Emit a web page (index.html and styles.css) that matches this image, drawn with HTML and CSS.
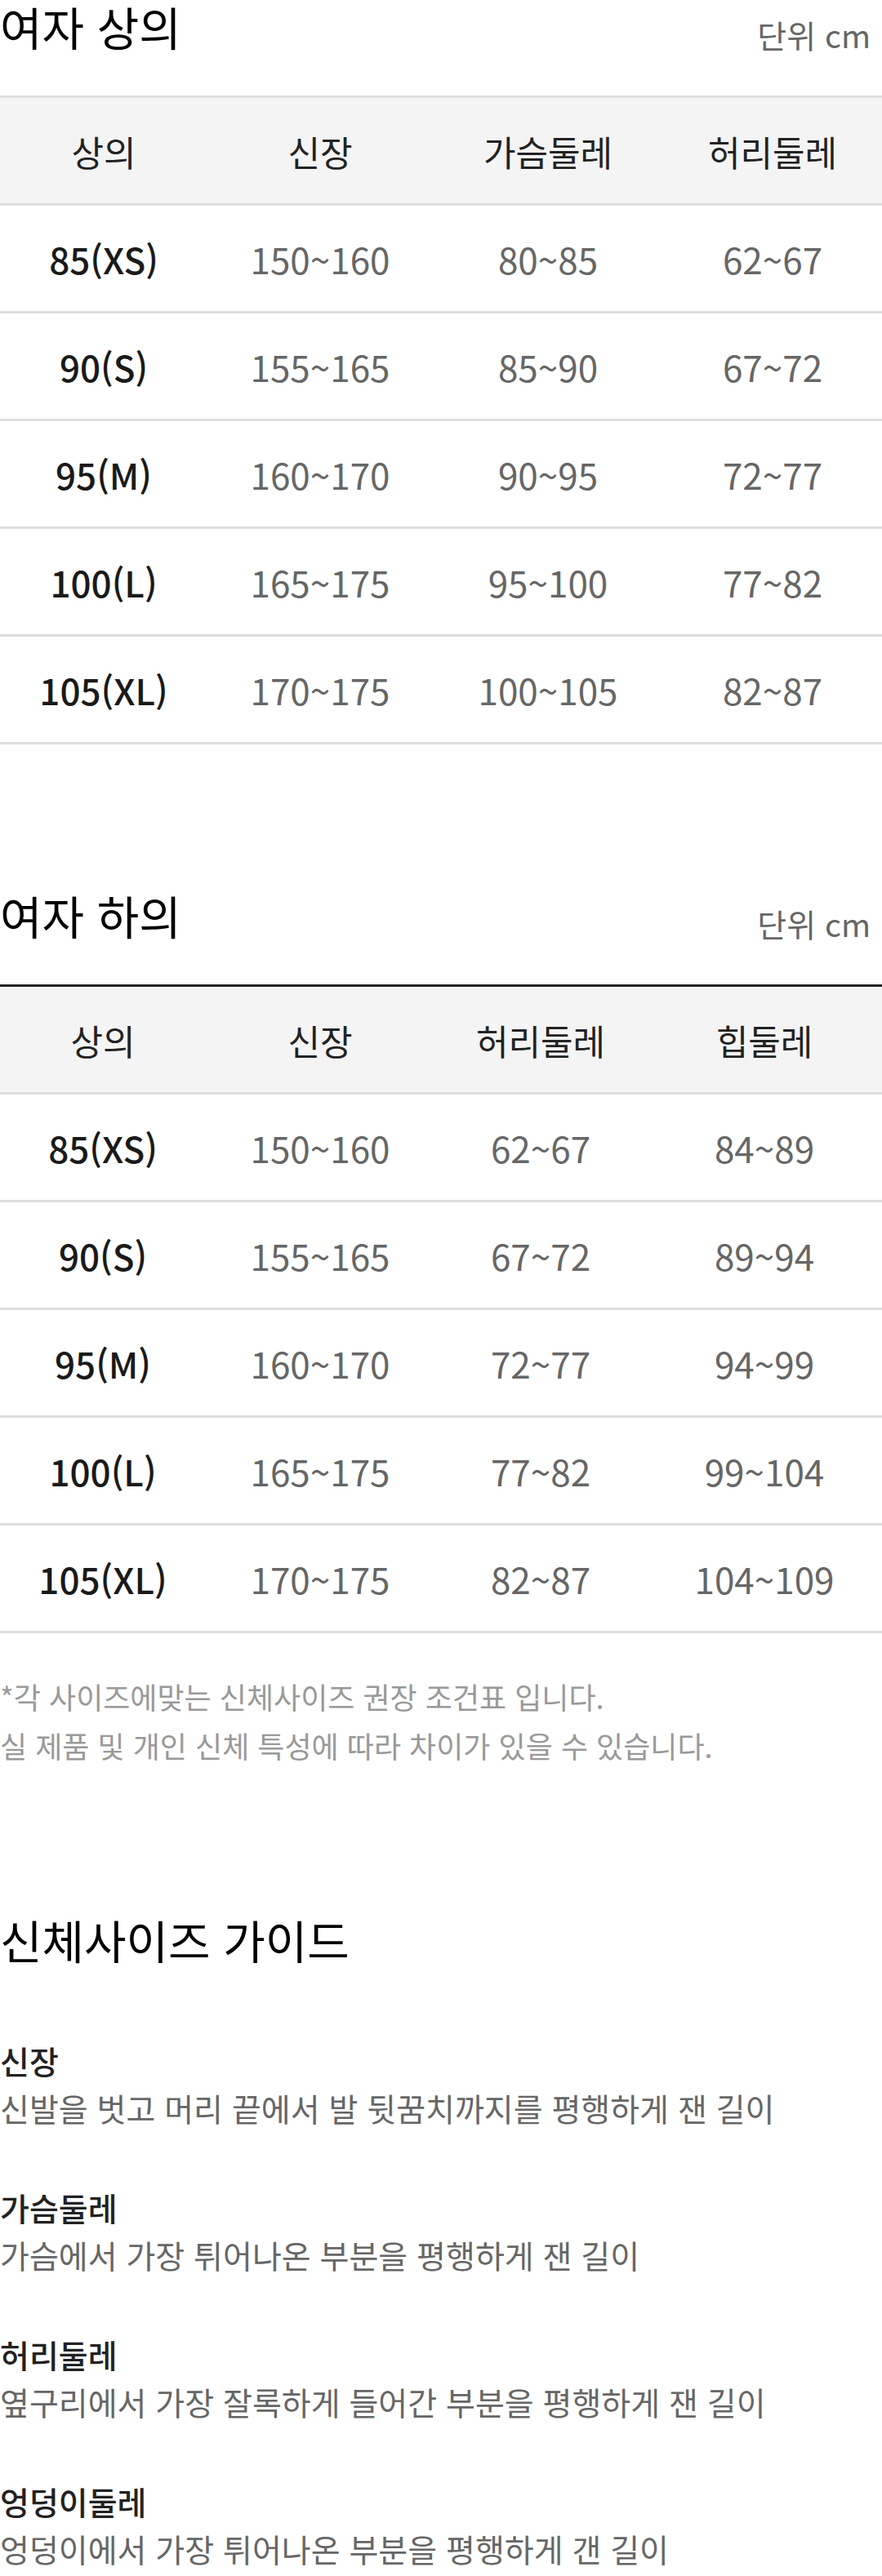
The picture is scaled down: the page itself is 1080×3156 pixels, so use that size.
FILE: index.html
```html
<!DOCTYPE html>
<html lang="ko">
<head>
<meta charset="utf-8">
<title>사이즈 가이드</title>
<link rel="stylesheet" href="styles.css">
</head>
<body>
<main class="page">
  <section class="size-sec">
    <div class="sec-head">
      <h2 class="sec-title">여자 상의</h2>
      <span class="unit">단위 cm</span>
    </div>
    <table class="size-table light-top">
      <colgroup>
        <col class="t1-c1"><col class="t1-c2"><col class="t1-c3"><col class="t1-c4">
      </colgroup>
      <thead>
        <tr><th>상의</th><th>신장</th><th>가슴둘레</th><th>허리둘레</th></tr>
      </thead>
      <tbody>
        <tr><td class="sz">85(XS)</td><td>150~160</td><td>80~85</td><td>62~67</td></tr>
        <tr><td class="sz">90(S)</td><td>155~165</td><td>85~90</td><td>67~72</td></tr>
        <tr><td class="sz">95(M)</td><td>160~170</td><td>90~95</td><td>72~77</td></tr>
        <tr><td class="sz">100(L)</td><td>165~175</td><td>95~100</td><td>77~82</td></tr>
        <tr><td class="sz">105(XL)</td><td>170~175</td><td>100~105</td><td>82~87</td></tr>
      </tbody>
    </table>
  </section>

  <section class="size-sec second">
    <div class="sec-head">
      <h2 class="sec-title">여자 하의</h2>
      <span class="unit">단위 cm</span>
    </div>
    <table class="size-table dark-top">
      <colgroup>
        <col class="t2-c1"><col class="t2-c2"><col class="t2-c3"><col class="t2-c4">
      </colgroup>
      <thead>
        <tr><th>상의</th><th>신장</th><th>허리둘레</th><th>힙둘레</th></tr>
      </thead>
      <tbody>
        <tr><td class="sz">85(XS)</td><td>150~160</td><td>62~67</td><td>84~89</td></tr>
        <tr><td class="sz">90(S)</td><td>155~165</td><td>67~72</td><td>89~94</td></tr>
        <tr><td class="sz">95(M)</td><td>160~170</td><td>72~77</td><td>94~99</td></tr>
        <tr><td class="sz">100(L)</td><td>165~175</td><td>77~82</td><td>99~104</td></tr>
        <tr><td class="sz">105(XL)</td><td>170~175</td><td>82~87</td><td>104~109</td></tr>
      </tbody>
    </table>
    <p class="note">*각 사이즈에맞는 신체사이즈 권장 조건표 입니다.<br>실 제품 및 개인 신체 특성에 따라 차이가 있을 수 있습니다.</p>
  </section>

  <section class="guide">
    <h2 class="sec-title">신체사이즈 가이드</h2>
    <dl class="guide-list">
      <div class="guide-item">
        <dt>신장</dt>
        <dd>신발을 벗고 머리 끝에서 발 뒷꿈치까지를 평행하게 잰 길이</dd>
      </div>
      <div class="guide-item">
        <dt>가슴둘레</dt>
        <dd>가슴에서 가장 튀어나온 부분을 평행하게 잰 길이</dd>
      </div>
      <div class="guide-item">
        <dt>허리둘레</dt>
        <dd>옆구리에서 가장 잘록하게 들어간 부분을 평행하게 잰 길이</dd>
      </div>
      <div class="guide-item">
        <dt>엉덩이둘레</dt>
        <dd>엉덩이에서 가장 튀어나온 부분을 평행하게 갠 길이</dd>
      </div>
    </dl>
  </section>
</main>
</body>
</html>
```

FILE: styles.css
```css
* { box-sizing: border-box; }

html, body {
  margin: 0;
  padding: 0;
  background: #fff;
}

body {
  font-family: "Noto Sans CJK KR", "Noto Sans", sans-serif;
  color: #111;
}

.page {
  width: 1080px;
}

.sec-head {
  display: flex;
  justify-content: space-between;
  align-items: flex-start;
  height: 117px;
  padding-top: 2px;
}

.sec-title {
  margin: 0;
  font-size: 56px;
  line-height: 60px;
  font-weight: 400;
  color: #000;
}

.unit {
  padding-top: 16px;
  padding-right: 14px;
  font-size: 39px;
  line-height: 48px;
  color: #666;
}

.size-table {
  width: 1080px;
  border-collapse: collapse;
  table-layout: fixed;
}

.light-top thead tr { border-top: 3px solid #dedede; }
.dark-top thead tr { border-top: 3px solid #222; }

.t1-c1 { width: 254px; }
.t1-c2 { width: 276px; }
.t1-c3 { width: 282px; }
.t1-c4 { width: 268px; }

.t2-c1 { width: 252px; }
.t2-c2 { width: 280px; }
.t2-c3 { width: 260px; }
.t2-c4 { width: 288px; }

.size-table tr {
  border-bottom: 3px solid #dedede;
}

.size-table th,
.size-table td {
  height: 132px;
  padding: 0;
  text-align: center;
  vertical-align: middle;
}

.size-table th {
  background: #f4f4f4;
  font-size: 43px;
  font-weight: 400;
  color: #222;
}

.size-table td {
  font-size: 44px;
  color: #666;
}

.size-table td.sz {
  color: #1a1a1a;
  font-weight: 500;
}

.second {
  margin-top: 177px;
}

.note {
  margin: 47px 0 0;
  font-size: 36px;
  line-height: 60px;
  color: #999;
}

.guide {
  margin-top: 178px;
}

.guide-list {
  margin: 89px 0 0;
  display: flex;
  flex-direction: column;
  gap: 64px;
}

.guide-item dt {
  font-size: 39px;
  line-height: 58px;
  font-weight: 500;
  color: #222;
}

.guide-item dd {
  margin: 0;
  font-size: 39px;
  line-height: 58px;
  color: #666;
}
```
